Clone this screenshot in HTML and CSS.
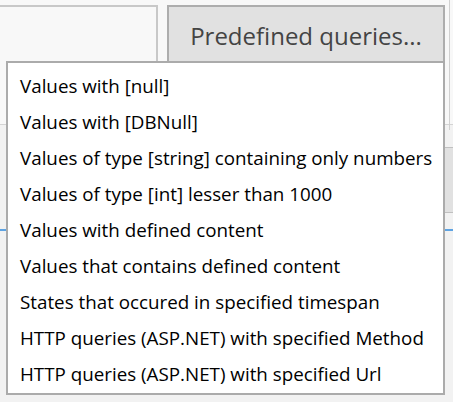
FILE: index.html
```html
<!DOCTYPE html>
<html>
<head>
<meta charset="utf-8">
<link rel="stylesheet" href="styles.css">
</head>
<body>
<div class="page">
  <div class="top">
    <div class="leftbox"></div>
    <div class="btn">Predefined queries...</div>
    <div class="rightstrip"></div>
  </div>
  <div class="mid">
    <div class="sidebox"></div>
  </div>
  <div class="accent"></div>
  <div class="rest"></div>
</div>
<ul class="menu">
  <li class="item">Values with [null]</li>
  <li class="item">Values with [DBNull]</li>
  <li class="item">Values of type [string] containing only numbers</li>
  <li class="item">Values of type [int] lesser than 1000</li>
  <li class="item">Values with defined content</li>
  <li class="item">Values that contains defined content</li>
  <li class="item">States that occured in specified timespan</li>
  <li class="item">HTTP queries (ASP.NET) with specified Method</li>
  <li class="item">HTTP queries (ASP.NET) with specified Url</li>
</ul>
</body>
</html>
```
FILE: styles.css
```css
html, body {
  margin: 0;
  padding: 0;
}
body {
  width: 453px;
  height: 402px;
  overflow: hidden;
  position: relative;
  background: #f2f2f2;
  font-family: "Open Sans", "Noto Sans", sans-serif;
}
.page {
  display: flex;
  flex-direction: column;
}
.top {
  height: 125px;
  box-sizing: border-box;
  background: #f8f8f8;
  border-bottom: 1px solid #d4d4d4;
  display: flex;
  align-items: flex-start;
  padding-top: 5px;
}
.leftbox {
  width: 158px;
  height: 118px;
  box-sizing: border-box;
  border-top: 2px solid #c8c8c8;
  border-right: 2px solid #c8c8c8;
  flex-shrink: 0;
}
.btn {
  margin-left: 9px;
  width: 278px;
  height: 58px;
  box-sizing: border-box;
  border: 2px solid #adadad;
  background: #e1e1e1;
  color: #444;
  font-size: 24px;
  display: flex;
  align-items: center;
  justify-content: center;
  padding-top: 2px;
  flex-shrink: 0;
}
.rightstrip {
  margin-left: 4px;
  margin-top: -5px;
  width: 4px;
  height: 130px;
  border-left: 1px solid #d0d0d0;
  flex-shrink: 0;
}
.mid {
  height: 104px;
  display: flex;
  justify-content: flex-end;
  align-items: flex-start;
  padding-top: 22px;
  box-sizing: border-box;
}
.sidebox {
  width: 8px;
  height: 66px;
  box-sizing: border-box;
  background: #e1e1e1;
  border-top: 1px solid #c0c0c0;
  border-bottom: 1px solid #c0c0c0;
}
.accent {
  height: 2px;
  background: #5ea3e2;
}
.rest {
  flex: 1;
}
.menu {
  position: absolute;
  left: 6px;
  top: 61px;
  width: 439px;
  height: 334px;
  box-sizing: border-box;
  margin: 0;
  padding: 5px 0 1px 0;
  list-style: none;
  background: #fff;
  border: 2px solid #ababab;
}
.item {
  height: 36px;
  line-height: 36px;
  padding-left: 12px;
  font-size: 18.8px;
  color: #000;
  white-space: nowrap;
}
```
